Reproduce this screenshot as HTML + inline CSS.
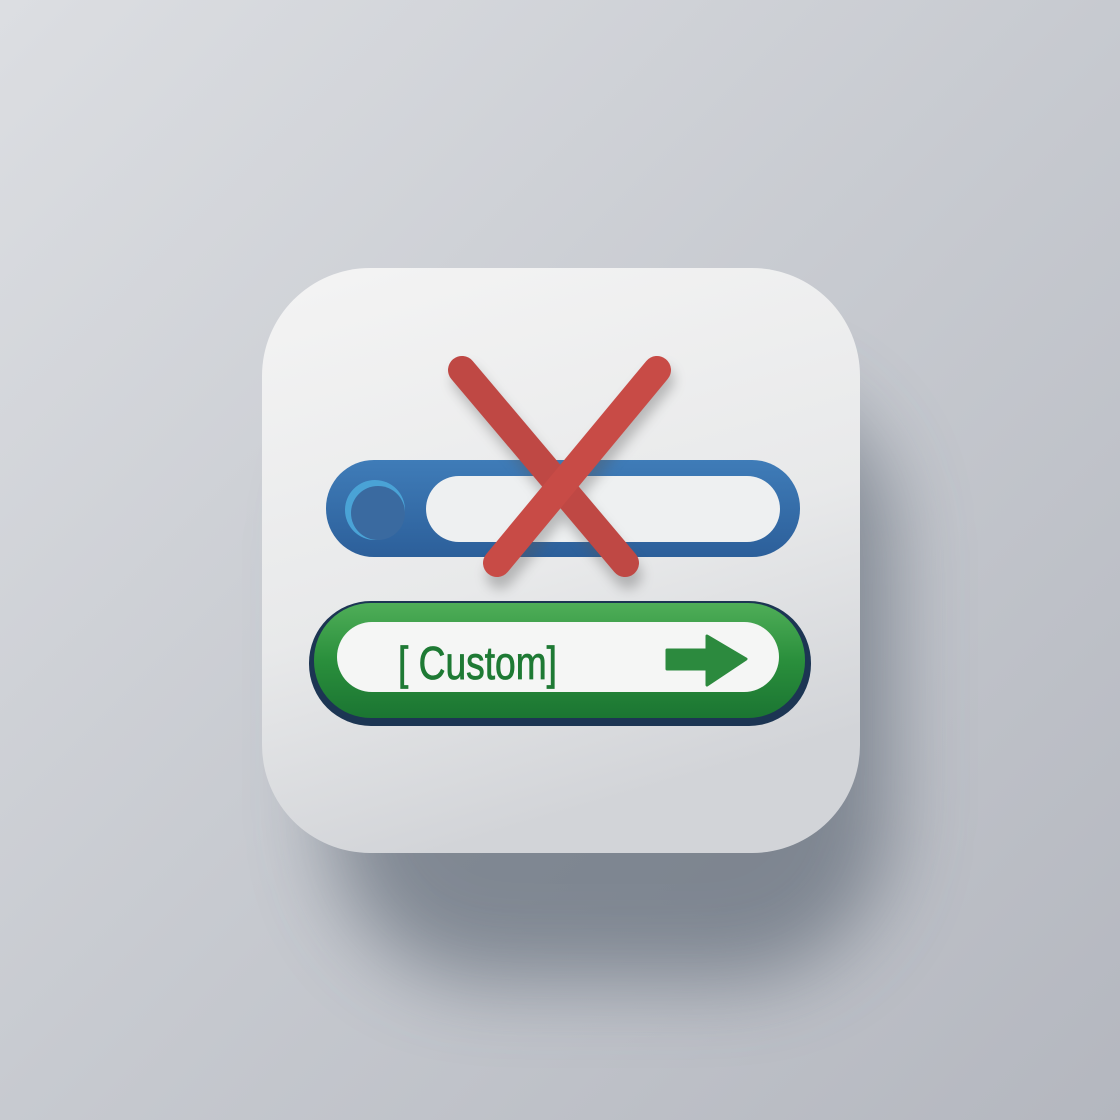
<!DOCTYPE html>
<html><head><meta charset="utf-8"><style>
html,body{margin:0;padding:0;width:1120px;height:1120px;overflow:hidden}
svg{display:block}
</style></head><body>
<svg width="1120" height="1120" viewBox="0 0 1120 1120" xmlns="http://www.w3.org/2000/svg">
<defs>
<linearGradient id="bg" x1="0" y1="0" x2="1" y2="1">
<stop offset="0" stop-color="#dcdee2"/><stop offset="0.5" stop-color="#c7cad0"/><stop offset="1" stop-color="#b4b7bf"/>
</linearGradient>
<linearGradient id="card" x1="0" y1="0" x2="0.3" y2="1">
<stop offset="0" stop-color="#f4f4f4"/><stop offset="0.6" stop-color="#e8e9ea"/><stop offset="1" stop-color="#d2d4d8"/>
</linearGradient>
<linearGradient id="green" x1="0" y1="0" x2="0" y2="1">
<stop offset="0" stop-color="#4fae58"/><stop offset="0.5" stop-color="#2a8f3c"/><stop offset="1" stop-color="#1b7532"/>
</linearGradient>
<linearGradient id="blue" x1="0" y1="0" x2="0" y2="1">
<stop offset="0" stop-color="#3f7cb8"/><stop offset="1" stop-color="#2c5f9a"/>
</linearGradient>
<filter id="sh" x="-30%" y="-30%" width="160%" height="180%"><feGaussianBlur stdDeviation="40"/></filter>
<filter id="sh2" x="-20%" y="-20%" width="140%" height="160%"><feGaussianBlur stdDeviation="6"/></filter>
</defs>
<rect width="1120" height="1120" fill="url(#bg)"/>
<rect x="330" y="380" width="560" height="600" rx="160" fill="#4a5463" opacity="0.55" filter="url(#sh)"/>
<rect x="262" y="268" width="598" height="585" rx="108" fill="url(#card)"/>
<!-- blue bar -->
<rect x="326" y="460" width="474" height="97" rx="48" fill="url(#blue)"/>
<rect x="426" y="476" width="354" height="66" rx="33" fill="#eef0f1"/>
<circle cx="375" cy="510" r="30" fill="#4aa3d6"/>
<circle cx="378" cy="513" r="27" fill="#3a6aa0"/>
<!-- red X -->
<g stroke-linecap="round" stroke-width="28" filter="url(#sh2)" opacity="0.35"><line x1="466" y1="380" x2="628" y2="575" stroke="#555"/><line x1="660" y1="380" x2="500" y2="575" stroke="#555"/></g>
<line x1="462" y1="370" x2="625" y2="563" stroke="#bf4844" stroke-width="28" stroke-linecap="round"/>
<line x1="657" y1="370" x2="497" y2="563" stroke="#c84b46" stroke-width="28" stroke-linecap="round"/>
<!-- green button -->
<rect x="309" y="601" width="502" height="125" rx="62" fill="#1c3553"/>
<rect x="314" y="603" width="491" height="115" rx="57" fill="url(#green)"/>
<rect x="337" y="622" width="442" height="70" rx="35" fill="#f5f6f5"/>
<text x="398" y="679" font-family="'Liberation Sans Narrow','Liberation Sans',sans-serif" font-size="46" fill="#1e7a34" stroke="#1e7a34" stroke-width="0.8" textLength="159" lengthAdjust="spacingAndGlyphs">[ Custom]</text>
<path d="M667 650 H707 V636 L746 659 L707 685 V669 H667 Z" fill="#2c8a3e" stroke="#2c8a3e" stroke-width="3" stroke-linejoin="round"/>
</svg>
</body></html>
